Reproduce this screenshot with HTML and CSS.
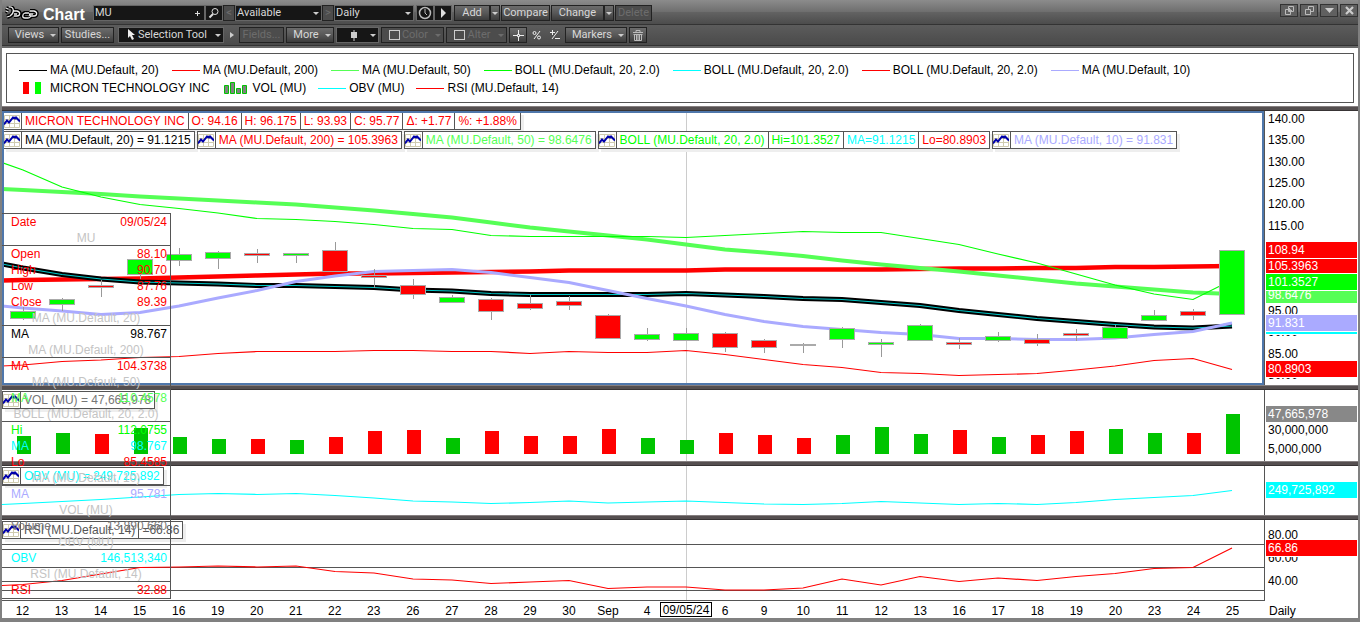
FILE: index.html
```html
<!DOCTYPE html>
<html lang="en">
<head>
    <meta charset="UTF-8">
    <meta name="viewport" content="width=device-width, initial-scale=1.0">
    <title>Chart - MU</title>
    <link rel="stylesheet" href="styles.css">
</head>
<body>

    <!-- Shared icons -->
    <svg class="sprite" aria-hidden="true">
        <symbol id="study" viewBox="0 0 16 14">
            <path d="M0.5 1.5h15v12h-15zM5.5 1v12M10.5 1v12M0 5.5h16M0 9.5h16" fill="none" stroke="#cfcbb0"/>
            <path d="M0 10.5l3-4 2 2 4-5 2 1 1-1 4 4" fill="none" stroke="#00a" stroke-width="2"/>
        </symbol>
    </svg>

    <!-- Title bar -->
    <header class="titlebar">
        <svg class="logo" viewBox="0 0 34 14" fill="none">
            <path d="M1 2l2 1M1 5l2 1M4 1c5-1 6 6 1 9l-3 1M8 5h4c4 1 3 5 0 5H9M12 8h-3M24 7h-4c-3 1-3 5 0 5h3c3 0 3-3 1-3M25 5h4c4 1 3 5 0 5h-3M28 8h-4" stroke="#000" stroke-width="4"/>
            <path d="M1 2l2 1M1 5l2 1M4 1c5-1 6 6 1 9l-3 1M8 5h4c4 1 3 5 0 5H9M12 8h-3M24 7h-4c-3 1-3 5 0 5h3c3 0 3-3 1-3M25 5h4c4 1 3 5 0 5h-3M28 8h-4" stroke="#eee" stroke-width="1.3"/>
        </svg>
        <h1>Chart</h1>
        <div class="field symbol">
            <input type="text" value="MU" aria-label="Symbol">
            <svg class="plus" viewBox="0 0 7 7"><path d="M3.5 1v5M1 3.5h5" stroke="#ddd"/></svg>
        </div>
        <button class="dark w18" aria-label="Search"><svg viewBox="0 0 12 12" width="12" height="12" fill="none" stroke="#ddd"><circle cx="7" cy="4.500" r="3"/><path d="M5 7l-3.500 3.500" stroke-width="2"/></svg></button>
        <button class="btn w12" disabled>&lt;</button>
        <div class="field available"><select aria-label="List"><option>Available</option></select></div>
        <button class="btn w12" disabled>&gt;</button>
        <div class="field daily"><select aria-label="Interval"><option>Daily</option></select></div>
        <button class="dark w18 gap" aria-label="Time"><svg viewBox="0 0 14 14" width="14" height="14" fill="none" stroke="#bbb"><circle cx="7" cy="7" r="5.500" stroke-width="1.500"/><path d="M7 3v4l2 2"/></svg></button>
        <button class="dark w18" aria-label="Play"><svg viewBox="0 0 10 10" width="10" height="10"><path d="M3 0v10l5-5z" fill="#ddd"/></svg></button>
        <button class="btn add gap">Add</button>
        <button class="btn arrow" aria-label="Add menu"></button>
        <button class="btn compare">Compare</button>
        <button class="btn change">Change</button>
        <button class="btn arrow" aria-label="Change menu"></button>
        <button class="btn delete" disabled>Delete</button>
        <div class="window-buttons">
            <button aria-label="Duplicate"><svg viewBox="0 0 9 9"><path d="M3.500 .5h5v5h-5zM.5 3.500h5v5h-5zM4.500 4v-2M3 4.500h4" fill="none" stroke="#bbb"/></svg></button>
            <button aria-label="Restore"><svg viewBox="0 0 9 9"><path d="M3.500 3V.5h5v5H6M.5 3.500h5v5h-5z" fill="none" stroke="#bbb"/></svg></button>
            <button aria-label="Minimize"><svg viewBox="0 0 9 9"><path d="M0 2h9L4.500 7z" fill="#ccc"/></svg></button>
            <button aria-label="Close"><svg viewBox="0 0 9 9"><path d="M1 1l7 7M8 1L1 8" stroke="#ccc" stroke-width="2.200"/></svg></button>
        </div>
    </header>

    <!-- Tool bar -->
    <nav class="toolbar">
        <button class="btn menu views">Views</button>
        <button class="btn studies">Studies...</button>
        <button class="dark menu selection"><svg viewBox="0 0 8 12" width="8" height="12"><path d="M1 0v9l2-2 2 4 2-1-2-4h3z" fill="#eee"/></svg>Selection Tool</button>
        <button class="plain small" aria-label="Next tool"><svg viewBox="0 0 4 8" width="4" height="8"><path d="M0 1v6l4-3z" fill="#ccc"/></svg></button>
        <button class="btn fields" disabled>Fields...</button>
        <button class="btn menu more">More</button>
        <button class="dark menu candle" aria-label="Chart type"><svg viewBox="0 0 6 11" width="6" height="11"><path d="M0 2h6v6H0zM2.500 0h1v11h-1z" fill="#ccc"/></svg></button>
        <button class="btn menu color" disabled><i class="swatch"></i>Color</button>
        <button class="btn menu alter" disabled><i class="swatch"></i>Alter</button>
        <button class="btn w18" aria-label="Crosshair"><svg viewBox="0 0 11 11" width="11" height="11" fill="none" stroke="#eee"><path d="M5.500 0v4M5.500 7v4M0 5.500h4M7 5.500h4M4.500 4.500h2v2h-2z"/></svg></button>
        <button class="plain" aria-label="Percent"><svg viewBox="0 0 10 10" width="10" height="10" fill="none" stroke="#eee"><circle cx="2.500" cy="3" r="1.500"/><circle cx="7" cy="7.500" r="1.500"/><path d="M8 1L2 9"/></svg></button>
        <button class="plain" aria-label="Plus minus"><svg viewBox="0 0 10 10" width="10" height="10" fill="none" stroke="#eee"><path d="M2.500 0v5M0 2.500h5M8 1L2 9M5 8.500h5"/></svg></button>
        <button class="btn menu markers">Markers</button>
        <button class="btn w18" aria-label="Remove all"><svg viewBox="0 0 12 12" width="12" height="12" fill="none" stroke="#bbb"><path d="M1 3.500h10M4 3V1.500h4V3M1.500 5.500h9M2.500 6v5.500h7V6M4.500 6v5M6 6v5M7.500 6v5"/></svg></button>
    </nav>

    <!-- Legend -->
    <section class="legend-area">
        <div class="legend">
            <ul>
                <li><i class="line black"></i>MA (MU.Default, 20)</li>
                <li><i class="line red"></i>MA (MU.Default, 200)</li>
                <li><i class="line light"></i>MA (MU.Default, 50)</li>
                <li><i class="line green"></i>BOLL (MU.Default, 20, 2.0)</li>
                <li><i class="line cyan"></i>BOLL (MU.Default, 20, 2.0)</li>
                <li><i class="line red"></i>BOLL (MU.Default, 20, 2.0)</li>
                <li><i class="line violet"></i>MA (MU.Default, 10)</li>
            </ul>
            <ul class="second">
                <li><svg class="key" viewBox="0 0 28 12"><path d="M4 0h6v12H4z" fill="red"/><path d="M16 0h6v12h-6z" fill="lime"/></svg>MICRON TECHNOLOGY INC</li>
                <li><svg class="key" viewBox="0 0 28 12"><path d="M2.500 3.500h4v8h-4zM8.500 .5h4v11h-4zM14.500 6.500h4v5h-4zM20.500 3.500h4v8h-4z" fill="#808080" stroke="#00c400"/></svg>VOL (MU)</li>
                <li><i class="line cyan"></i>OBV (MU)</li>
                <li><i class="line red"></i>RSI (MU.Default, 14)</li>
            </ul>
        </div>
    </section>

    <main class="panes">
        <!-- Price -->
        <section class="pane price">
            <div class="plot active">
                <svg class="chart" id="priceChart" viewBox="2 111 1262 274" preserveAspectRatio="none"></svg>
                <div class="tags">
                    <div class="tag-row">
                        <div class="tag t-red"><svg><use href="#study"/></svg><span>MICRON TECHNOLOGY INC</span><span>O: 94.16</span><span>H: 96.175</span><span>L: 93.93</span><span>C: 95.77</span><span>Δ: +1.77</span><span>%: +1.88%</span></div>
                    </div>
                    <div class="tag-row">
                        <div class="tag"><svg><use href="#study"/></svg><span>MA (MU.Default, 20) = 91.1215</span></div>
                        <div class="tag t-red"><svg><use href="#study"/></svg><span>MA (MU.Default, 200) = 105.3963</span></div>
                        <div class="tag t-light"><svg><use href="#study"/></svg><span>MA (MU.Default, 50) = 98.6476</span></div>
                        <div class="tag t-green"><svg><use href="#study"/></svg><span>BOLL (MU.Default, 20, 2.0)</span><span>Hi=101.3527</span><span class="t-cyan">MA=91.1215</span><span class="t-red">Lo=80.8903</span></div>
                        <div class="tag t-violet"><svg><use href="#study"/></svg><span>MA (MU.Default, 10) = 91.831</span></div>
                    </div>
                </div>
            </div>
            <div class="scale">
                <span>140.00</span><span>135.00</span><span>130.00</span><span>125.00</span><span>120.00</span><span>115.00</span><span>110.00</span><span>105.00</span><span>100.00</span><span>95.00</span><span>90.00</span><span>85.00</span><span>80.00</span>
                <b class="last light p-ma50">98.6476</b>
                <b class="last cyan p-ma20">91.1215</b>
                <b class="last red p-ma200">105.3963</b>
                <b class="last red p-close">108.94</b>
                <b class="last green p-hi">101.3527</b>
                <b class="last violet p-ma10">91.831</b>
                <b class="last red p-lo">80.8903</b>
            </div>
        </section>

        <!-- Volume -->
        <section class="pane volume">
            <div class="plot">
                <svg class="chart" id="volumeChart" viewBox="2 390 1262 71" preserveAspectRatio="none"></svg>
                <div class="tags"><div class="tag t-gray"><svg><use href="#study"/></svg><span>VOL (MU) = 47,665,978</span></div></div>
            </div>
            <div class="scale">
                <span>30,000,000</span><span>5,000,000</span>
                <b class="last gray p-vol">47,665,978</b>
            </div>
        </section>

        <!-- OBV -->
        <section class="pane obv">
            <div class="plot">
                <svg class="chart" id="obvChart" viewBox="2 466 1262 49" preserveAspectRatio="none"></svg>
                <div class="tags"><div class="tag t-cyan"><svg><use href="#study"/></svg><span>OBV (MU) = 249,725,892</span></div></div>
            </div>
            <div class="scale">
                <b class="last cyan p-obv">249,725,892</b>
            </div>
        </section>

        <!-- RSI -->
        <section class="pane rsi">
            <div class="plot">
                <svg class="chart" id="rsiChart" viewBox="2 520 1262 81" preserveAspectRatio="none"></svg>
                <div class="tags"><div class="tag t-dark"><svg><use href="#study"/></svg><span>RSI (MU.Default, 14)</span><span>=66.86</span></div></div>
            </div>
            <div class="scale">
                <span>80.00</span><span>60.00</span><span>40.00</span>
                <b class="last red p-rsi">66.86</b>
            </div>
        </section>

        <!-- Values under the cursor -->
        <table class="cursor-data">
            <tbody>
                <tr class="t-red"><th>Date</th><td>09/05/24</td></tr>
                <tr class="name"><td colspan="2">MU</td></tr>
                <tr class="t-red"><th>Open</th><td>88.10</td></tr>
                <tr class="t-red"><th>High</th><td>90.70</td></tr>
                <tr class="t-red"><th>Low</th><td>87.76</td></tr>
                <tr class="t-red"><th>Close</th><td>89.39</td></tr>
                <tr class="name"><td colspan="2">MA (MU.Default, 20)</td></tr>
                <tr><th>MA</th><td>98.767</td></tr>
                <tr class="name"><td colspan="2">MA (MU.Default, 200)</td></tr>
                <tr class="t-red"><th>MA</th><td>104.3738</td></tr>
                <tr class="name"><td colspan="2">MA (MU.Default, 50)</td></tr>
                <tr class="t-light"><th>MA</th><td>110.4578</td></tr>
                <tr class="name"><td colspan="2">BOLL (MU.Default, 20, 2.0)</td></tr>
                <tr class="t-green"><th>Hi</th><td>112.0755</td></tr>
                <tr class="t-cyan"><th>MA</th><td>98.767</td></tr>
                <tr class="t-red"><th>Lo</th><td>85.4585</td></tr>
                <tr class="name"><td colspan="2">MA (MU.Default, 10)</td></tr>
                <tr class="t-violet"><th>MA</th><td>95.781</td></tr>
                <tr class="name"><td colspan="2">VOL (MU)</td></tr>
                <tr class="t-gray"><th>Volume</th><td>13,890,660</td></tr>
                <tr class="name"><td colspan="2">OBV (MU)</td></tr>
                <tr class="t-cyan"><th>OBV</th><td>146,513,340</td></tr>
                <tr class="name"><td colspan="2">RSI (MU.Default, 14)</td></tr>
                <tr class="t-red"><th>RSI</th><td>32.88</td></tr>
            </tbody>
        </table>
    </main>

    <!-- Dates -->
    <div class="dates">
        <ol id="dateAxis"></ol>
        <span class="interval">Daily</span>
    </div>

    <script src="chart.js"></script>
</body>
</html>
```

FILE: styles.css
```css
/* General Styles */
*,
*::before,
*::after {
    box-sizing: border-box;
}

body {
    margin: 0;
    min-height: 100vh;
    font: 12px/16px "Liberation Sans", Arial, sans-serif;
    color: #000;
    background: #fff;
    border: solid #808080;
    border-width: 0 2px 4px;
    overflow-x: hidden;
}

ul,
ol {
    list-style: none;
    margin: 0;
    padding: 0;
}

.sprite {
    position: absolute;
    width: 0;
    height: 0;
}

/* Title bar and tool bar */
.titlebar,
.toolbar {
    display: flex;
    align-items: center;
    margin: 0 -2px;
    white-space: nowrap;
}

.titlebar {
    height: 25px;
    padding: 2px 2px 0 5px;
    background: linear-gradient(#8c8c8c, #6e6e6e 50%, #626262 52%, #4c4c4c);
    border-bottom: 1px solid #333;
}

.toolbar {
    height: 23px;
    padding: 0 8px 3px;
    gap: 2px;
    background: linear-gradient(#5c5c5c, #4a4a4a 20px, #333 20px, #333 21px, #686868 21px);
}

.logo {
    width: 34px;
    height: 14px;
    margin-right: 4px;
}

h1 {
    margin: 4px 8px 0 0;
    width: 42px;
    font-size: 16px;
    line-height: 18px;
    color: #fff;
}

button,
input,
select {
    font: 11px/14px Roboto, Tahoma, sans-serif;
    color: #d8d8d8;
}

button {
    display: flex;
    align-items: center;
    justify-content: center;
    flex: none;
    height: 16px;
    margin: 0;
    padding: 0;
    position: relative;
}

.btn {
    background: linear-gradient(#6c6c6c, #585858 50%, #3c3c3c);
    border: 1px solid #222;
}

.btn:disabled {
    color: #6c6c6c;
    background: #4c4c4c;
}

.dark {
    background: #161616;
    border: 1px solid #666;
}

.plain {
    width: 16px;
    background: none;
    border: none;
}

.plain.small {
    width: 11px;
}

.w12 {
    width: 12px;
}

.w18 {
    width: 18px;
}

.gap {
    margin-left: 2px;
}

.field {
    position: relative;
    height: 16px;
    background: #161616;
    border: 1px solid #666;
}

.field input,
.field select {
    display: block;
    width: 100%;
    height: 14px;
    padding: 0 1px;
    border: none;
    background: none;
    appearance: none;
}

.symbol {
    width: 112px;
}

.plus {
    position: absolute;
    right: 3px;
    top: 4px;
    width: 7px;
    height: 7px;
}

.available {
    width: 87px;
}

.daily {
    width: 80px;
}

/* Drop-down arrows */
.available::after,
.daily::after,
.menu::after,
.arrow::after {
    content: "";
    position: absolute;
    right: 2px;
    top: 6px;
    border: 3px solid transparent;
    border-top-color: #ccc;
    border-bottom: none;
}

.arrow::after {
    right: 1px;
}

.menu:disabled::after {
    border-top-color: #6c6c6c;
}

.menu {
    padding-right: 8px;
}

.add {
    width: 36px;
}

.arrow {
    width: 10px;
}

.compare {
    width: 49px;
    margin-left: 1px;
}

.change {
    width: 53px;
    margin-left: 1px;
}

.delete {
    width: 37px;
    margin-left: 1px;
}

.views {
    width: 51px;
}

.studies {
    width: 53px;
}

.selection {
    width: 106px;
    margin-left: 2px;
}

.selection svg {
    margin-right: 3px;
}

.fields {
    width: 45px;
}

.more {
    width: 48px;
}

.candle {
    width: 43px;
}

.color {
    width: 63px;
}

.alter {
    width: 61px;
}

.markers {
    width: 62px;
}

.swatch {
    width: 11px;
    height: 10px;
    margin-right: 2px;
    border: 1px solid #ccc;
}

.window-buttons {
    display: flex;
    gap: 2px;
    margin: 0 0 6px auto;
}

.window-buttons button {
    width: 18px;
    height: 13px;
    background: #606060;
    border: 1px solid #333;
}

.window-buttons svg {
    width: 9px;
    height: 9px;
}

/* Legend */
.legend-area {
    padding: 5px 4px 3px;
}

.legend {
    border: 1px solid #555;
    padding: 7px 12px 5px;
    min-height: 50px;
}

.legend ul {
    display: flex;
    flex-wrap: wrap;
    column-gap: 13px;
}

.legend .second {
    column-gap: 12px;
}

.legend li {
    display: flex;
    align-items: center;
    gap: 3px;
    line-height: 18px;
}

.line {
    width: 28px;
    height: 1px;
}

.key {
    width: 28px;
    height: 12px;
}

.black { background: #000; }
.red { background: #f00; }
.light { background: #5f5; }
.green { background: #0f0; }
.cyan { background: #0ff; }
.violet { background: #aaf; }
.gray { background: #888; }

.t-red { color: #f00; }
.t-light { color: #5f5; }
.t-green { color: #0f0; }
.t-cyan { color: #0ff; }
.t-violet { color: #aaf; }
.t-gray { color: #777; }
.t-dark { color: #555; }

/* Panes */
.panes {
    position: relative;
}

.pane {
    display: flex;
    border-top: 5px solid #554f50;
    position: relative;
}

/* Light and dark edge of the splitter */
.pane::before {
    content: "";
    position: absolute;
    left: 0;
    right: 0;
    top: -5px;
    height: 5px;
    border-top: 1px solid #857f80;
    border-bottom: 1px solid #383435;
}

.plot {
    flex: 1;
    position: relative;
    border-right: 1px solid #555;
}

.active::after {
    content: "";
    position: absolute;
    inset: 0;
    border: 2px solid #4f77ab;
}

.chart {
    display: block;
    width: 100%;
    height: 100%;
}

.price { height: 279px; }
.volume { height: 76px; }
.obv { height: 54px; }
.rsi { height: 86px; }

/* Study tags */
.tags {
    position: absolute;
    left: 0;
    top: 1px;
}

.price .tags {
    left: 1px;
}

.tag-row {
    display: flex;
    gap: 2px;
    margin-bottom: 1px;
    white-space: nowrap;
}

.tag {
    display: flex;
    height: 18px;
    background: #fff;
    border: 1px solid #555;
    box-shadow: 3px 3px #eee;
    white-space: nowrap;
}

.tag svg {
    width: 16px;
    height: 14px;
    margin: 1px 1px 1px 0;
}

.tag span {
    padding: 0 3px;
    border-left: 1px solid #555;
}

/* Scales */
.scale {
    position: relative;
    flex: 0 0 93px;
    padding: 0 0 2px 3px;
    display: flex;
    flex-direction: column;
    overflow: hidden;
}

.price .scale {
    justify-content: space-between;
}

.volume .scale {
    padding-top: 32px;
    gap: 3px;
}

.rsi .scale {
    padding-top: 7px;
    gap: 7px;
}

.last {
    position: absolute;
    left: 1px;
    right: 1px;
    height: 16px;
    padding-left: 2px;
    font-weight: normal;
    color: #fff;
    box-shadow: 0 0 0 1px #fff;
}

.p-close { top: 131px; }
.p-ma200 { top: 147px; }
.p-hi { top: 163px; }
.p-ma50 { top: 176px; }
.p-ma10 { top: 204px; }
.p-ma20 { top: 207px; }
.p-lo { top: 250px; }
.p-vol { top: 16px; }
.p-obv { top: 16px; }
.p-rsi { top: 20px; }

/* Cursor values */
.cursor-data {
    position: absolute;
    left: 0;
    top: 107px;
    width: 169px;
    border: solid #555;
    border-width: 1px 1px 1px 0;
    border-spacing: 0;
    table-layout: fixed;
}

.cursor-data th,
.cursor-data td {
    height: 16px;
    padding: 0 3px 0 9px;
    font-weight: normal;
    text-align: left;
    vertical-align: top;
    white-space: nowrap;
}

.cursor-data th {
    width: 60px;
}

.cursor-data td {
    padding-left: 0;
    text-align: right;
}

.cursor-data .name td {
    padding: 1px 0 0;
    line-height: 14px;
    color: #c4c4c4;
    text-align: center;
    border-bottom: 1px solid #555;
}

/* Date axis */
.dates {
    display: flex;
    height: 17px;
    padding-top: 1px;
    line-height: 18px;
}

.dates ol {
    flex: 1;
    display: grid;
    grid-template-columns: repeat(32, minmax(0, 1fr));
    padding: 0 14px 0 1px;
}

.dates li {
    display: flex;
    justify-content: center;
    height: 16px;
    white-space: nowrap;
}

.dates .cursor {
    flex: none;
    height: 15px;
    padding: 0 2px;
    line-height: 15px;
    border: 1px solid #000;
}

.interval {
    flex: 0 0 92px;
    height: 16px;
    padding-left: 3px;
}
```

FILE: chart.js
```js
const STEP = 39;
const FIRST = 23;
const CURSOR = 17;

const dates = ['12', '13', '14', '15', '16', '19', '20', '21', '22', '23', '26', '27', '28', '29', '30', 'Sep',
    '4', '09/05/24', '6', '9', '10', '11', '12', '13', '16', '17', '18', '19', '20', '23', '24', '25'];

// Each study starts with its value at the left edge, then one per day
const ma50 = [189, 190, 192, 194, 196.5, 198.5, 200.5, 202.5, 204.5, 207.5, 210.5, 214, 217.5, 222.5, 227.5, 231.5, 235.5, 239.5, 244.5, 249.5, 252.5, 256, 260.5, 264.5, 268, 271.5, 275.5, 279.5, 283.5, 286.5, 289.5, 292.5, 294];
const ma200 = [280.5, 280, 279.5, 279, 278.5, 277.5, 276.5, 275.5, 274.5, 273.5, 273.5, 273, 272.5, 272, 271.5, 270.5, 270.5, 270.5, 270.5, 269.5, 269.5, 269.5, 269.5, 269.5, 269, 268.5, 268.5, 268, 268, 267, 267, 266.5, 266];
const ma20 = [264, 268, 274.5, 279, 282, 283, 284, 285.5, 285.5, 286.5, 287.5, 290, 291, 293.5, 294.5, 294.5, 294.5, 294.5, 293.5, 295, 296.5, 298.5, 299.5, 302.5, 305.5, 310.5, 314.5, 318.5, 321.5, 324.5, 327, 328, 326];
const ma10 = [306, 308, 311, 314.5, 312.5, 306, 298, 290.5, 281.5, 276, 271.5, 270.5, 269.5, 272.5, 277.5, 282.5, 290.5, 298.5, 306, 314.5, 321.5, 326.5, 329.5, 332.5, 334.5, 338.5, 338.5, 339.5, 339.5, 338, 334.5, 331.5, 323];
const bollHi = [162.5, 170, 187, 197, 204.5, 208.5, 213, 218.5, 219.5, 221.5, 224.5, 228.5, 229.5, 235.5, 236.5, 236.5, 236.5, 236.5, 237.5, 235.5, 233.5, 231.5, 232.5, 232.5, 238.5, 244.5, 254, 263, 274, 285, 294, 299.5, 280];
const bollLo = [366, 365, 361.5, 360, 357.5, 356.5, 353.5, 351.5, 351.5, 351.5, 350.5, 350.5, 351.5, 351.5, 353.5, 351.5, 352.5, 352.5, 350.5, 354.5, 359.5, 364.5, 367.5, 372.5, 373.5, 375.5, 374.5, 373.5, 370, 366, 360.5, 358.5, 369.5];
const obv = [504.5, 503.5, 501.5, 499.5, 497, 494.5, 493.5, 494.5, 493.5, 495.5, 498, 501, 502, 503.5, 502.5, 501, 503, 502, 501, 502.5, 504, 504.5, 503.5, 501.5, 503, 504.5, 503.5, 504.5, 502.5, 499.5, 497.5, 495.5, 490.5];
const rsi = [585.5, 584.5, 580.5, 574, 567.5, 567, 566, 567, 566, 571.5, 573, 579, 580, 583.5, 582, 580.5, 588.5, 587, 587, 590, 590, 588, 579, 585, 576.5, 581.5, 578, 580.5, 576.5, 573.5, 568.5, 567.5, 548];

// color, body top, body bottom, wick top, wick bottom, volume top
const days = [
    ['g', 311, 319, 307, 320, 436], ['g', 299, 305, 298, 311, 433], ['r', 285, 288, 280, 297, 434], ['g', 259, 275, 259, 279, 428],
    ['g', 254, 261, 248, 266, 437], ['g', 252, 259, 251, 269, 439], ['r', 253, 256, 249, 263, 439], ['g', 253, 256, 253, 263, 440],
    ['r', 250, 272, 242, 272, 437], ['r', 275, 278, 269, 288, 431], ['r', 285, 295, 279, 299, 430], ['g', 297, 303, 295, 303, 438],
    ['r', 299, 312, 298, 320, 431], ['r', 303, 309, 295, 310, 436], ['r', 301, 306, 296, 310, 436], ['r', 315, 339, 314, 339, 429],
    ['g', 334, 340, 328, 341, 438], ['g', 333, 341, 328, 341, 440], ['r', 333, 348, 332, 352, 433], ['r', 340, 348, 339, 353, 435],
    ['r', 344, 346, 343, 353, 438], ['g', 328, 340, 327, 348, 435], ['g', 342, 345, 339, 357, 427], ['g', 325, 341, 324, 341, 434],
    ['r', 342, 345, 338, 349, 430], ['g', 336, 341, 332, 342, 437], ['r', 339, 344, 334, 346, 435], ['r', 333, 336, 329, 341, 431],
    ['g', 327, 339, 325, 339, 429], ['g', 315, 321, 310, 321, 433], ['r', 311, 316, 309, 320, 433], ['g', 250, 315, 250, 315, 414]
];

function x(i) {
    return FIRST + i * STEP;
}

function line(values, color, width) {
    const points = values.map((y, i) => `${i === 0 ? 2 : x(i - 1)},${y}`).join(' ');
    return `<polyline points="${points}" fill="none" stroke="${color}" stroke-width="${width}"/>`;
}

function rule(y) {
    return `<rect x="2" y="${y}" width="1262" height="1" fill="#555"/>`;
}

function cursor(top, height) {
    return `<rect x="${x(CURSOR)}" y="${top}" width="1" height="${height}" fill="#ccc"/>`;
}

function candle([color, top, bottom, high, low], i) {
    const fill = color === 'g' ? '#0f0' : '#f00';
    return `<rect x="${x(i)}" y="${high}" width="1" height="${low - high}" fill="#999"/>` +
        `<rect x="${x(i) - 13}" y="${top}" width="26" height="${bottom - top}" fill="#aaa"/>` +
        `<rect x="${x(i) - 12}" y="${top + 1}" width="24" height="${bottom - top - 2}" fill="${fill}"/>`;
}

function volume([color, , , , , top], i) {
    return `<rect x="${x(i) - 6}" y="${top}" width="14" height="${454 - top}" fill="${color === 'g' ? '#00c400' : '#f00'}"/>`;
}

document.getElementById('priceChart').innerHTML =
    cursor(111, 274) +
    line(bollLo, '#f00', 1.2) +
    line(ma200, '#f00', 4.5) +
    line(ma50, '#5f5', 4) +
    line(bollHi, '#0f0', 1.2) +
    line(ma20, '#000', 5) +
    line(ma20, '#00c8c8', 1.2) +
    line(ma10, '#aaf', 3) +
    days.map(candle).join('');

document.getElementById('volumeChart').innerHTML = cursor(390, 71) + days.map(volume).join('');
document.getElementById('obvChart').innerHTML = cursor(466, 49) + line(obv, '#0ff', 1.2);
document.getElementById('rsiChart').innerHTML =
    cursor(520, 81) + rule(544) + rule(567) + rule(590) + rule(600) + line(rsi, '#f00', 1.2);

document.getElementById('dateAxis').innerHTML = dates
    .map((d, i) => `<li>${i === CURSOR ? `<span class="cursor">${d}</span>` : d}</li>`)
    .join('');
```
